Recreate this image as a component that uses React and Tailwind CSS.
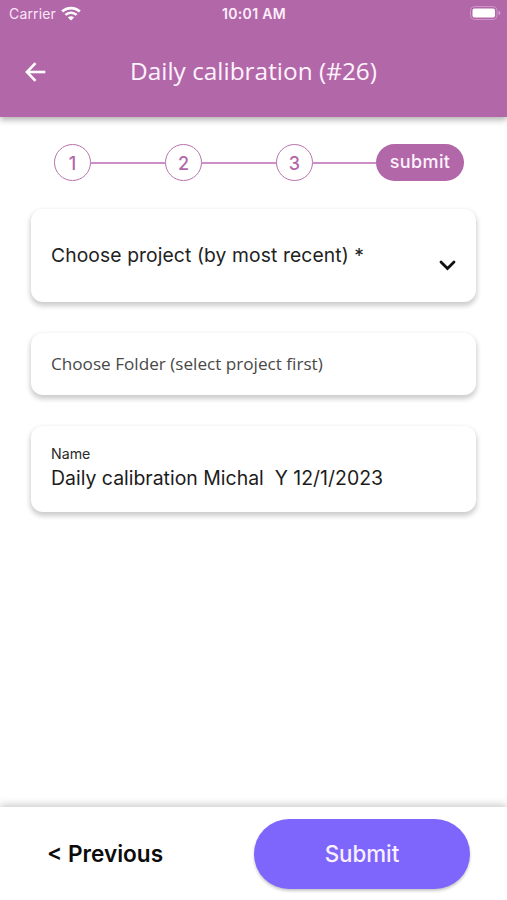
import React, { useState } from 'react';

const steps = ['1', '2', '3'];

function StatusBar() {
  return (
    <div className="h-[28px] flex items-center justify-between pl-[9px] pr-[6px] font-['Inter',sans-serif]">
      <div className="flex-1 flex items-center">
        <span className="text-[14px] leading-[28px] tracking-[0.15px] text-[#fbe6f8]">Carrier</span>
        <svg className="ml-[5px] -mt-[2px]" width="20" height="15" viewBox="0 0 20 15" fill="none">
          <path d="M1.2 5.6C6 1 14 1 18.8 5.6" stroke="white" strokeWidth="2.8" />
          <path d="M4.4 8.9C7.5 6 12.5 6 15.6 8.9" stroke="white" strokeWidth="2.5" />
          <path d="M10 14.6L6.9 11.4C8.6 9.8 11.4 9.8 13.1 11.4Z" fill="white" />
        </svg>
      </div>
      <span className="mr-[2px] pb-px text-[14px] font-semibold tracking-[0.35px] text-[#fdeefb]">10:01 AM</span>
      <div className="flex-1 flex justify-end">
        <svg className="-mt-[2px]" width="31" height="14" viewBox="0 0 31 14" fill="none">
          <rect x="0.5" y="0.5" width="26.5" height="13" rx="4" stroke="#cf92c7" />
          <rect x="2.5" y="2.5" width="22.5" height="9" rx="2" fill="white" />
          <path d="M28.6 4.8V9.2C29.7 8.8 30.3 8 30.3 7C30.3 6 29.7 5.2 28.6 4.8Z" fill="#d9a3d2" />
        </svg>
      </div>
    </div>
  );
}

function Header() {
  return (
    <header className="h-[117px] shrink-0 bg-[#b267a8] shadow-[0_3px_6px_rgba(0,0,0,0.3)]">
      <StatusBar />
      <div className="h-[86px] grid grid-cols-[70px_1fr_70px] items-center">
        <button type="button" aria-label="Back" className="pl-[25px] pt-px">
          <svg width="21" height="20" viewBox="0 0 21 20" fill="none" stroke="white" strokeWidth="2.6">
            <path d="M20.3 10H2.5" />
            <path d="M10.5 1.2L1.9 10L10.5 18.8" />
          </svg>
        </button>
        <h1 className="text-center text-[24.4px] leading-[32px] whitespace-nowrap text-[#fff3fd] font-['Open_Sans',sans-serif]">
          Daily calibration (#26)
        </h1>
      </div>
    </header>
  );
}

function Stepper() {
  return (
    <div className="flex items-center pl-[54px] pr-[43px] mt-[27px] h-[37px]">
      {steps.map((step) => (
        <React.Fragment key={step}>
          <div className="w-[37px] h-[37px] shrink-0 rounded-full border border-[#b873af] pt-px flex items-center justify-center text-[18px] font-medium text-[#b267a8]">
            {step}
          </div>
          {step === '3' ? (
            <div className="flex-1 h-[2px] bg-[#cd8fc6]" />
          ) : (
            <div className="w-[74px] h-[2px] bg-[#cd8fc6]" />
          )}
        </React.Fragment>
      ))}
      <div className="w-[88px] h-[37px] shrink-0 rounded-full bg-[#b267a8] flex items-center justify-center pb-[3px] text-[18px] font-medium tracking-[0.4px] text-[#fff3fd]">
        submit
      </div>
    </div>
  );
}

function App() {
  const [name, setName] = useState('Daily calibration Michal  Y 12/1/2023');

  return (
    <div className="h-screen flex flex-col bg-white overflow-hidden font-['Inter',sans-serif]">
      <Header />
      <main className="flex-1">
        <Stepper />
        <div className="mt-[28px] ml-[31px] mr-[31px] flex flex-col">
          <button
            type="button"
            className="h-[93px] px-[20px] rounded-[12px] bg-white shadow-[0_3px_5px_1px_rgba(0,0,0,0.2)] flex items-center justify-between text-left"
          >
            <span className="text-[19.3px] tracking-[0.1px] text-[#222222] whitespace-nowrap">
              Choose project (by most recent) *
            </span>
            <svg className="mt-[19px]" width="17" height="11" viewBox="0 0 17 11" fill="none" stroke="#111111" strokeWidth="2.8" strokeLinecap="round">
              <path d="M2 2L8.5 8.6L15 2" />
            </svg>
          </button>
          <div className="mt-[31px] h-[62px] px-[20px] rounded-[12px] bg-white shadow-[0_3px_5px_1px_rgba(0,0,0,0.2)] flex items-center text-[17.15px] text-[#484848] font-['Open_Sans',sans-serif]">
            Choose Folder (select project first)
          </div>
          <label className="mt-[31px] h-[86px] px-[20px] pt-[18px] rounded-[12px] bg-white shadow-[0_3px_5px_1px_rgba(0,0,0,0.2)] flex flex-col">
            <span className="text-[14.2px] leading-[20px] text-[#2a2a2a]">Name</span>
            <input
              value={name}
              onChange={(e) => setName(e.target.value)}
              className="mt-px h-[28px] text-[19.45px] text-[#1c1c1c] outline-none"
            />
          </label>
        </div>
      </main>
      <footer className="h-[93px] shrink-0 flex items-center justify-between pl-[47px] pr-[37px] bg-white shadow-[0_-2px_8px_rgba(0,0,0,0.22)]">
        <button type="button" className="pt-px text-[22.6px] font-semibold text-[#0c0c0c]">
          &lt; Previous
        </button>
        <button
          type="button"
          className="w-[216px] h-[70px] pt-px rounded-full bg-[#7e66fc] shadow-[0_2px_3px_rgba(0,0,0,0.22)] text-[22.3px] font-medium text-[#f8f0ff]"
        >
          Submit
        </button>
      </footer>
    </div>
  );
}

export default App;
